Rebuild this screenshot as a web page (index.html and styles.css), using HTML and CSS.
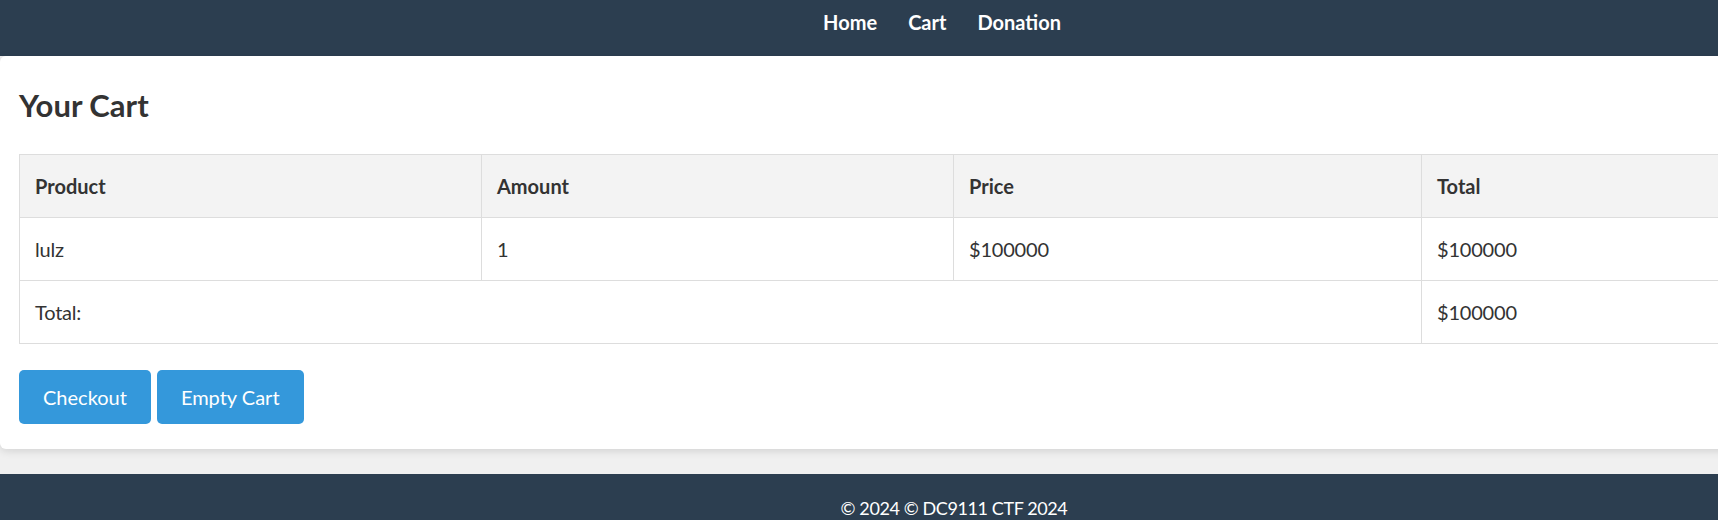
FILE: index.html
```html
<!DOCTYPE html>
<html lang="en">
<head>
<meta charset="utf-8">
<title>Your Cart</title>
<link rel="stylesheet" href="styles.css">
</head>
<body>
<div class="page">
  <header class="topbar">
    <nav class="nav">
      <a href="#" class="nav-link">Home</a>
      <a href="#" class="nav-link">Cart</a>
      <a href="#" class="nav-link">Donation</a>
    </nav>
  </header>
  <main class="card">
    <h2 class="title">Your Cart</h2>
    <table class="cart">
      <colgroup>
        <col class="c-product">
        <col class="c-amount">
        <col class="c-price">
        <col class="c-total">
      </colgroup>
      <thead>
        <tr><th>Product</th><th>Amount</th><th>Price</th><th>Total</th></tr>
      </thead>
      <tbody>
        <tr><td>lulz</td><td>1</td><td>$100000</td><td>$100000</td></tr>
        <tr><td colspan="3">Total:</td><td>$100000</td></tr>
      </tbody>
    </table>
    <div class="actions">
      <button class="btn">Checkout</button>
      <button class="btn">Empty Cart</button>
    </div>
  </main>
  <footer class="footer">
    <p class="footer-text">© 2024 © DC9111 CTF 2024</p>
  </footer>
</div>
</body>
</html>
```
FILE: styles.css
```css
html, body {
  margin: 0;
  padding: 0;
  overflow: hidden;
}
body {
  background: #f0f0f0;
  color: #333;
  font-family: "Segoe UI", Lato, "Noto Sans", sans-serif;
  font-size: 20px;
}
.page {
  width: 1884px;
}
.topbar {
  background: #2c3e50;
  height: 56px;
  box-sizing: border-box;
  padding-top: 8px;
}
.nav {
  display: flex;
  justify-content: center;
  gap: 31px;
  line-height: 28px;
}
.nav-link {
  color: #fff;
  text-decoration: none;
  font-weight: bold;
  font-size: 20px;
}
.card {
  display: block;
  background: #fff;
  padding: 19px 19px 25px;
  border-radius: 6px;
  box-shadow: 0 2px 8px rgba(0, 0, 0, 0.13);
  margin-bottom: 25px;
}
.title {
  font-size: 31px;
  line-height: 36px;
  font-weight: bold;
  margin: 12px 0 31px;
  color: #333;
}
.cart {
  width: 100%;
  border-collapse: collapse;
  table-layout: fixed;
}
.c-product { width: 462px; }
.c-amount { width: 472px; }
.c-price { width: 468px; }
.cart th,
.cart td {
  border: 1px solid #ddd;
  padding: 15px;
  text-align: left;
  line-height: 32px;
  font-size: 20px;
}
.cart td {
  letter-spacing: -0.2px;
}
.cart th {
  background: #f3f3f3;
  font-weight: bold;
}
.actions {
  display: flex;
  gap: 6px;
  margin-top: 26px;
}
.btn {
  height: 54px;
  padding: 0 24px;
  background: #3498db;
  color: #fff;
  border: none;
  border-radius: 5px;
  font-family: inherit;
  font-size: 20px;
}
.footer {
  background: #2c3e50;
  color: #fff;
  padding: 20px 0 20px;
}
.footer-text {
  margin: 0;
  text-align: center;
  line-height: 28px;
  font-size: 18px;
  letter-spacing: -0.4px;
  padding-left: 24px;
}
```
